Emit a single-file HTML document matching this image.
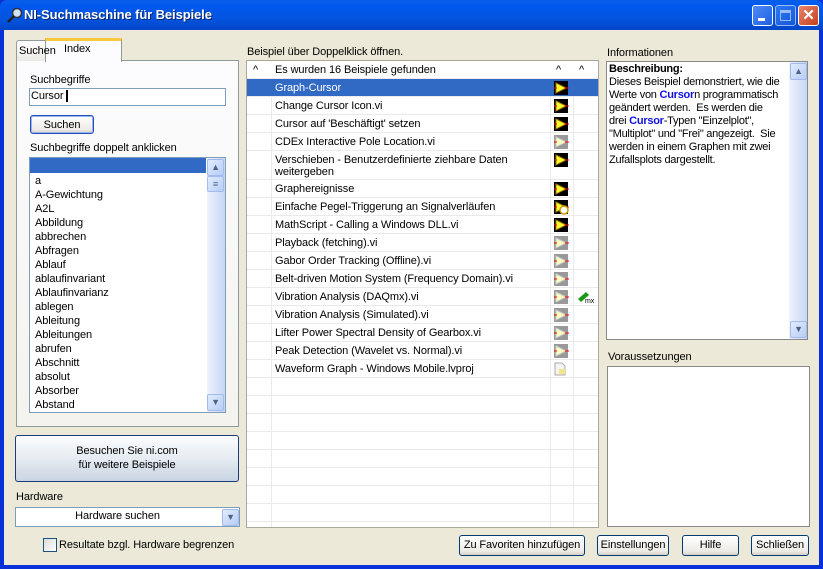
<!DOCTYPE html>
<html><head><meta charset="utf-8"><style>
*{box-sizing:border-box}
body{margin:0;width:823px;height:569px;overflow:hidden;font-family:"Liberation Sans",sans-serif;font-size:11px;color:#000;position:relative;background:#0831d9;letter-spacing:-0.1px}
.a{position:absolute}
.win{left:4px;top:30px;width:815px;height:535px;background:#ece9d8}
.title{left:0;top:0;width:823px;height:30px;background:linear-gradient(#0a5fe8,#0058ee 20%,#0455e0 60%,#0046c8);border-radius:7px 7px 0 0}
.tb{width:21px;height:21px;top:5px;border:1px solid #fff;border-radius:3px;background:linear-gradient(135deg,#4c8cf8,#1f5fe0)}
.box{background:#fff;border:1px solid #7f9db9}
.btn{border:1px solid #003c74;border-radius:3px;background:linear-gradient(#fff,#ecebe6 80%,#d6d0c5);text-align:center;line-height:18px}
.sb{background:linear-gradient(90deg,#eef3fd,#c7d6f6);}
.arr{width:17px;height:17px;border:1px solid #a3baea;border-radius:2px;background:linear-gradient(135deg,#e0ebfd,#b7cdf5);color:#4d6185;font-size:9px;text-align:center;line-height:15px}
.row{position:absolute;left:0;width:351px;height:18px;border-bottom:1px solid #eaeaea}
.row span{position:absolute;left:28px;top:3px}
.vl{position:absolute;top:0;width:1px;height:466px;background:#eaeaea}
</style></head><body>
<div class="a title"></div>
<svg class="a" style="left:6px;top:6px" width="18" height="18"><circle cx="11" cy="7" r="4.5" fill="#cfe3ff" stroke="#333" stroke-width="1.5"/><line x1="8" y1="10" x2="2" y2="16" stroke="#222" stroke-width="2.5"/></svg>
<div class="a" style="left:24px;top:7px;color:#fff;font-weight:bold;font-size:13px;text-shadow:1px 1px #0a246a">NI-Suchmaschine für Beispiele</div>
<div class="a tb" style="left:752px"><div class="a" style="left:5px;top:12px;width:7px;height:3px;background:#fff"></div></div>
<div class="a tb" style="left:775px;opacity:.6"><div class="a" style="left:4px;top:4px;width:11px;height:11px;border:1px solid #fff;border-top-width:3px"></div></div>
<div class="a tb" style="left:798px;background:linear-gradient(135deg,#e8856c,#c4401c);color:#fff;font-weight:bold;font-size:15px;text-align:center;line-height:19px">✕</div>
<div class="a win"></div>

<div class="a" style="left:16px;top:60px;width:223px;height:367px;border:1px solid #919b9c;background:linear-gradient(#fcfcfe,#f4f3ee)"></div>
<div class="a" style="left:45px;top:38px;width:77px;height:24px;border:1px solid #919b9c;border-bottom:0;border-top:3px solid #ffc83c;background:#fcfcfe"></div>
<div class="a" style="left:16px;top:40px;width:29px;height:21px;border:1px solid #919b9c;border-bottom:0;border-right:0;background:linear-gradient(#fff,#ecebe6);border-radius:3px 0 0 0"></div>
<div class="a" style="left:19px;top:45px">Suchen</div>
<div class="a" style="left:64px;top:43px">Index</div>
<div class="a" style="left:30px;top:74px">Suchbegriffe</div>
<div class="a box" style="left:29px;top:88px;width:197px;height:18px"></div>
<div class="a" style="left:31px;top:90px">Cursor <span style="border-left:2px solid #000">&nbsp;</span></div>
<div class="a btn" style="left:30px;top:115px;width:64px;height:19px;border-color:#2550b8;box-shadow:inset 0 0 0 1px #9ab4ee">Suchen</div>
<div class="a" style="left:30px;top:142px">Suchbegriffe doppelt anklicken</div>
<div class="a box" style="left:29px;top:157px;width:197px;height:256px;font-size:11px">
<div style="background:#316ac5;height:15px;width:176px;"></div>
<div style="padding:1px 0 0 5px;line-height:14px">a<br>A-Gewichtung<br>A2L<br>Abbildung<br>abbrechen<br>Abfragen<br>Ablauf<br>ablaufinvariant<br>Ablaufinvarianz<br>ablegen<br>Ableitung<br>Ableitungen<br>abrufen<br>Abschnitt<br>absolut<br>Absorber<br>Abstand</div>
<div class="a sb" style="left:177px;top:0;width:18px;height:254px"></div>
<div class="a arr" style="left:177px;top:1px">▲</div>
<div class="a arr" style="left:177px;top:18px;height:16px;line-height:14px">≡</div>
<div class="a arr" style="left:177px;top:236px">▼</div>
</div>
<div class="a btn" style="left:15px;top:435px;width:224px;height:47px;line-height:14px;padding-top:8px;border-color:#1c3c7c;background:linear-gradient(#fbfcfd,#e6ecf2 50%,#c8d4e2)">Besuchen Sie ni.com<br>für weitere Beispiele</div>
<div class="a" style="left:16px;top:491px">Hardware</div>
<div class="a box" style="left:15px;top:507px;width:225px;height:20px;text-align:center;line-height:17px;padding-right:20px">Hardware suchen
<div class="a arr" style="left:206px;top:1px">▼</div></div>
<div class="a" style="left:43px;top:538px;width:14px;height:14px;border:1px solid #1c5180;background:linear-gradient(135deg,#dcdcd7,#fff)"></div>
<div class="a" style="left:59px;top:539px">Resultate bzgl. Hardware begrenzen</div>

<div class="a" style="left:247px;top:46px">Beispiel über Doppelklick öffnen.</div>
<div class="a" style="left:246px;top:60px;width:353px;height:468px;background:#fff;border:1px solid #aca899;overflow:hidden">
<div class="vl" style="left:24px"></div><div class="vl" style="left:303px"></div><div class="vl" style="left:326px"></div>
<div class="row" style="top:0;height:18px;background:#fff"><span style="left:6px">^</span><span>Es wurden 16 Beispiele gefunden</span><span style="left:309px">^</span><span style="left:332px">^</span></div>
<div id="rows"></div>
</div>

<div class="a" style="left:607px;top:47px">Informationen</div>
<div class="a box" style="left:606px;top:61px;width:202px;height:279px;border-color:#8a8a8a">
<div style="padding:1px 0 0 2px;line-height:13px;white-space:nowrap;letter-spacing:-0.25px">
<b>Beschreibung:</b><br>Dieses Beispiel demonstriert, wie die<br>Werte von <b style="color:#1010e0">Cursor</b>n programmatisch<br>geändert werden.&nbsp; Es werden die<br>drei <b style="color:#1010e0">Cursor</b>-Typen "Einzelplot",<br>"Multiplot" und "Frei" angezeigt.&nbsp; Sie<br>werden in einem Graphen mit zwei<br>Zufallsplots dargestellt.</div>
<div class="a sb" style="left:182px;top:0;width:18px;height:277px"></div>
<div class="a arr" style="left:183px;top:1px">▲</div>
<div class="a arr" style="left:183px;top:259px">▼</div>
</div>
<div class="a" style="left:608px;top:351px">Voraussetzungen</div>
<div class="a box" style="left:607px;top:366px;width:203px;height:161px;border-color:#8a8a8a"></div>

<div class="a btn" style="left:459px;top:535px;width:126px;height:21px">Zu Favoriten hinzufügen</div>
<div class="a btn" style="left:597px;top:535px;width:72px;height:21px">Einstellungen</div>
<div class="a btn" style="left:682px;top:535px;width:57px;height:21px">Hilfe</div>
<div class="a btn" style="left:751px;top:535px;width:58px;height:21px">Schließen</div>

<script>
var items=[["Graph-Cursor",1],["Change Cursor Icon.vi",1],["Cursor auf 'Beschäftigt' setzen",1],["CDEx Interactive Pole Location.vi",2],["Verschieben - Benutzerdefinierte ziehbare Daten<br>weitergeben",1,29],["Graphereignisse",1],["Einfache Pegel-Triggerung an Signalverläufen",3],["MathScript - Calling a Windows DLL.vi",1],["Playback (fetching).vi",2],["Gabor Order Tracking (Offline).vi",2],["Belt-driven Motion System (Frequency Domain).vi",2],["Vibration Analysis (DAQmx).vi",2,18,1],["Vibration Analysis (Simulated).vi",2],["Lifter Power Spectral Density of Gearbox.vi",2],["Peak Detection (Wavelet vs. Normal).vi",2],["Waveform Graph - Windows Mobile.lvproj",4]];
var y=18,h="";
function ic(t){if(t==4)return '<svg style="position:absolute;left:306px;top:2px" width="14" height="14"><path d="M2 1h7l3 3v9H2z" fill="#f4f4f0" stroke="#aaa"/><rect x="6" y="7" width="6" height="5" fill="#f0e68c"/></svg>';
var c=t==2?'#999':'#000',f=t==2?'#ffffc0':'#ffff30';
var s='<svg style="position:absolute;left:306px;top:1px" width="16" height="16"><rect x="1" y="1" width="14" height="14" fill="'+c+'"/><path d="M3 3l10 5-10 5z" fill="'+f+'" stroke="'+(t==2?'#ccc':'#a08000')+'"/><line x1="1" y1="8" x2="4" y2="8" stroke="red"/><line x1="12" y1="8" x2="16" y2="8" stroke="red"/>';
if(t==3)s+='<circle cx="11" cy="11" r="4" fill="#fff" stroke="#c8a000" stroke-width="1.5"/>';
return s+'</svg>';}
items.forEach(function(it,i){var hh=it[2]||18;
h+='<div class="row" style="top:'+y+'px;height:'+hh+'px;'+(i==0?'background:#316ac5;color:#fff;width:351px;':'')+'"><span style="line-height:12px">'+it[0]+'</span>'+ic(it[1])+(it[3]?'<svg style="position:absolute;left:330px;top:2px" width="18" height="14"><path d="M1 9l8-7 3 3-8 7z" fill="#1a9a1a"/><text x="8" y="13" font-size="7" font-family="Liberation Sans">mx</text></svg>':'')+'</div>';y+=hh;});
for(;y<470;y+=18)h+='<div class="row" style="top:'+y+'px"></div>';
document.getElementById('rows').innerHTML=h;
</script>
</body></html>
